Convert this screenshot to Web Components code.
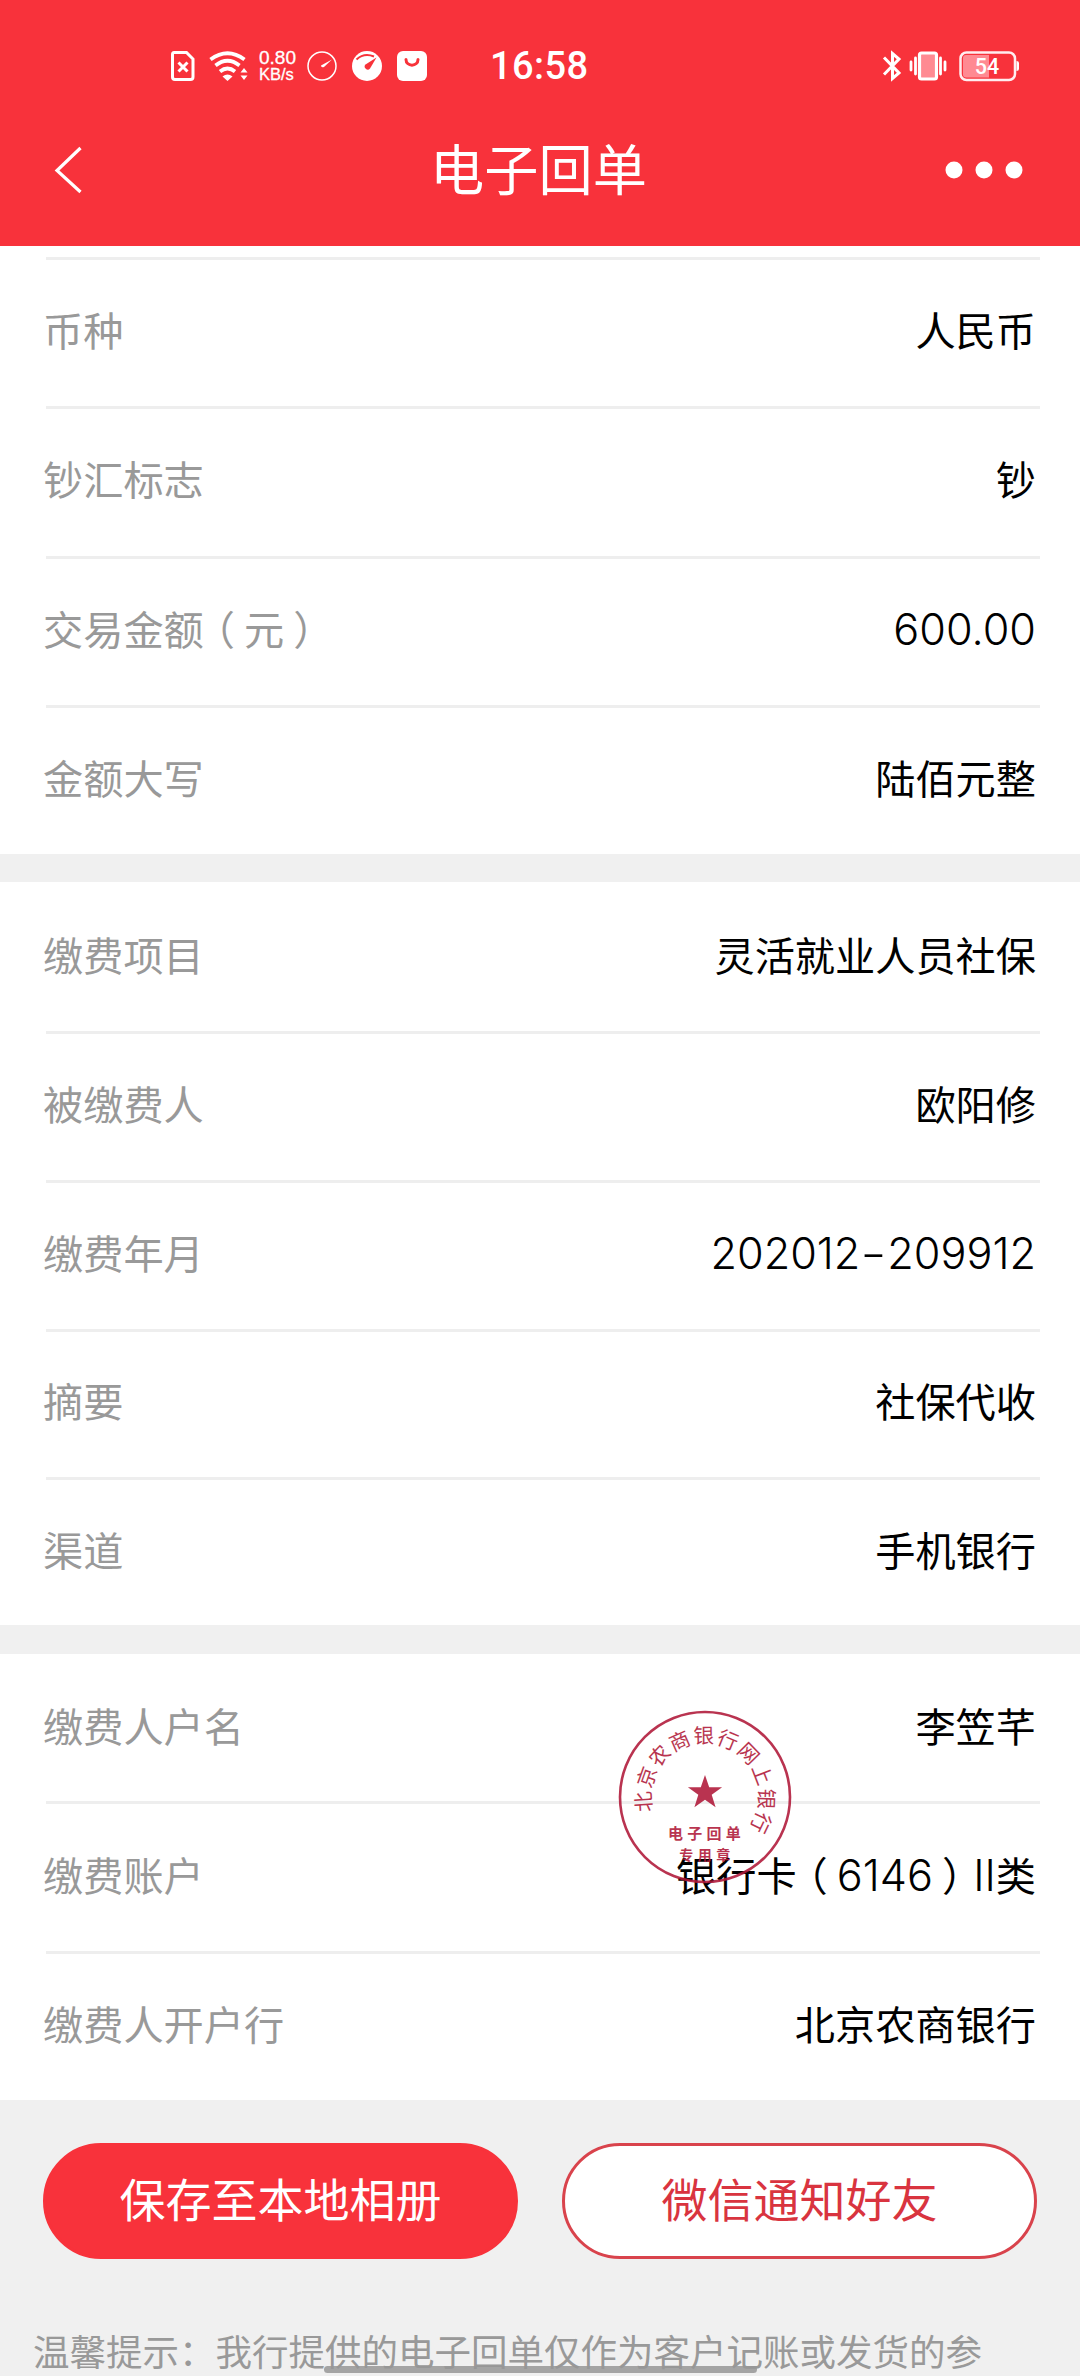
<!DOCTYPE html>
<html lang="zh-CN">
<head>
<meta charset="utf-8">
<title>电子回单</title>
<style>
html,body{
    margin:0;
    padding:0;
}
body{
    height:2376px;
    overflow:hidden;
    background:#f0f0f0;
    font-family:"Noto Sans CJK SC",sans-serif;
}
</style>
</head>
<body>
<receipt-page></receipt-page>
<script>
class StatusBar extends HTMLElement {

    constructor() {
        super();
        const shadowRoot = this.attachShadow({ mode: 'open' });
        shadowRoot.innerHTML = `
        <style>
        :host{
            display:flex;
            align-items:center;
            box-sizing:border-box;
            height:94px;
            padding:38px 60px 0 170px;
            color:#fff;
            font-family:Roboto,sans-serif;
        }
        svg{
            display:block;
            flex:none;
        }
        .speed{
            width:38px;
            margin:0 10px 0 11px;
            font-family:"Liberation Sans",sans-serif;
            font-size:19px;
            line-height:17px;
            white-space:nowrap;
            -webkit-text-stroke:.3px #fff;
        }
        .speed small{
            display:block;
            font-size:16.5px;
        }
        .time{
            flex:1;
            margin-left:63px;
            font-size:38px;
            line-height:40px;
            font-weight:500;
            letter-spacing:.4px;
        }
        </style>
        <svg width="26" height="32" viewBox="0 0 26 32" fill="none" stroke="#fff" stroke-width="3"><path d="M4 2.5H16.5L23 9V27Q23 29.500 20.500 29.500H5Q2.500 29.500 2.500 27V4.500Q2.500 2.500 4 2.500Z"/><path d="M8.500 12.500L17.500 21.500M17.500 12.500L8.500 21.500"/></svg>
        <svg style="margin-left:13px" width="39" height="32" viewBox="0 0 39 32" fill="none" stroke="#fff" stroke-width="3.800"><path d="M1.500 9.500Q18.500 -3 35.500 9.500"/><path d="M6.500 15.500Q18.500 6 30.500 15.500"/><path d="M11 21.500Q18.500 15.500 26 21.500"/><path d="M13.500 26.500Q18.500 22.500 23.500 26.500L18.500 31Z" fill="#fff" stroke="none"/><path d="M31.500 22.500L35 18L38.500 22.500ZM31.500 25.500L35 30L38.500 25.500Z" fill="#fff" stroke="none"/></svg>
        <div class="speed">0.80<small>KB/s</small></div>
        <svg width="30" height="32" viewBox="0 0 30 32"><circle cx="15" cy="16" r="14" fill="none" stroke="#fff" stroke-width="1.500"/><path d="M14 15.500L25 9.500L17 17Q14 18 14 15.500Z" fill="#fff"/></svg>
        <svg style="margin-left:15px" width="30" height="32" viewBox="0 0 30 32"><circle cx="15" cy="16" r="15" fill="#fff"/><path d="M4.500 9.500Q12 2.500 22 6.500" fill="none" stroke="#f83239" stroke-width="2"/><path d="M24.500 7.500L18 18.500A3 3 0 1 1 13.500 14.500Z" fill="#f83239"/></svg>
        <svg style="margin-left:15px" width="30" height="32" viewBox="0 0 30 32"><rect y="1" width="30" height="30" rx="6" fill="#fff"/><path d="M9 9.500C9 17 21 17 21 9.500" fill="none" stroke="#f83239" stroke-width="3" stroke-linecap="round"/></svg>
        <div class="time">16:58</div>
        <svg width="20" height="32" viewBox="0 0 20 32" fill="none" stroke="#fff" stroke-width="3"><path d="M2 7.500L17 23L10.500 28.500V3.500L17 9L2 24.500"/></svg>
        <svg style="margin:0 12px 0 7px" width="38" height="32" viewBox="0 0 38 32"><rect x="10.500" y="3" width="17" height="26" rx="2" fill="#ff8a92" stroke="#fff" stroke-width="3.200"/><path d="M6.500 8V24M2 12V20M31.500 8V24M36 12V20" stroke="#fff" stroke-width="2.800" stroke-linecap="round"/></svg>
        <svg width="61" height="32" viewBox="0 0 61 32"><rect x="1.500" y="2.500" width="54.500" height="27.500" rx="6" fill="none" stroke="#ffeef0" stroke-width="2.500"/><path d="M7 5H30V27.500H7Q4 27.500 4 24.500V8Q4 5 7 5Z" fill="#ff8a92"/><path d="M57.500 11Q60 11 60 13V19Q60 21 57.500 21Z" fill="#fff"/><text x="28" y="23.800" font-family="Roboto,sans-serif" font-size="21.500" font-weight="500" fill="#fff" text-anchor="middle">54</text></svg>
        `
    }
}

class NavBar extends HTMLElement {

    constructor() {
        super();
        const shadowRoot = this.attachShadow({ mode: 'open' });
        shadowRoot.innerHTML = `
        <style>
        :host{
            display:grid;
            grid-template-columns:1fr auto 1fr;
            align-items:center;
            height:152px;
            padding:0 57px 0 54px;
            color:#fff;
        }
        h1{
            margin:0;
            padding-bottom:7px;
            font-size:54.200px;
            font-weight:400;
            line-height:145px;
        }
        .more{
            justify-self:end;
        }
        svg{
            display:block;
        }
        </style>
        <svg width="30" height="48" viewBox="0 0 30 48"><path d="M26.500 2L3 24.500L26.500 46" fill="none" stroke="#fff" stroke-width="3.200"/></svg>
        <h1><slot></slot></h1>
        <svg class="more" width="78" height="18" viewBox="0 0 78 18" fill="#fff"><circle cx="9" cy="9" r="8.500"/><circle cx="39" cy="9" r="8.500"/><circle cx="69" cy="9" r="8.500"/></svg>
        `
    }
}

class ReceiptRow extends HTMLElement {

    constructor() {
        super();
        const shadowRoot = this.attachShadow({ mode: 'open' });
        shadowRoot.innerHTML = `
        <style>
        :host{
            display:block;
            height:var(--rowHeight,149.330px);
        }
        .row{
            display:flex;
            justify-content:space-between;
            align-items:center;
            box-sizing:border-box;
            height:100%;
            margin:0 40px 0 46px;
            padding:0 4px 8px 0;
            border-top:3px solid var(--lineColor,#eee);
            font-size:40.200px;
            line-height:60px;
            white-space:nowrap;
        }
        :host([first]) .row{
            border-color:transparent;
        }
        .label{
            margin-left:-3px;
            color:#999;
        }
        .value{
            color:#000;
        }
        .num{
            font-family:Inter,sans-serif;
            font-weight:350;
            font-size:43.200px;
            line-height:1;
        }
        .dash{
            display:inline-block;
            width:27px;
            text-align:center;
            transform:scaleX(1.35);
        }
        .open,
        .close{
            display:inline-block;
            transform:translateX(-9px);
        }
        .close{
            transform:translateX(9px);
        }
        </style>
        <div class="row">
            <span class="label">${this.format(this.label)}</span>
            <span class="value">${this.format(this.value)}</span>
        </div>
        `
    }

    get label() {
        return this.getAttribute('label')||'';
    }

    get value() {
        return this.getAttribute('value')||'';
    }

    // latin runs use their own face, full-width brackets sit centred in their cell
    format(text) {
        return text
            .replace(/[0-9.I-]+/g,(run)=>'<span class="num">'+run.replace('-','<span class="dash">-</span>')+'</span>')
            .replace(/（/g,'<span class="open">（</span>')
            .replace(/）/g,'<span class="close">）</span>');
    }
}

class ReceiptSection extends HTMLElement {

    constructor() {
        super();
        const shadowRoot = this.attachShadow({ mode: 'open' });
        shadowRoot.innerHTML = `
        <style>
        :host{
            display:block;
            position:relative;
            background:#fff;
        }
        </style>
        <slot></slot>
        `
    }
}

class BankStamp extends HTMLElement {

    constructor() {
        super();
        const shadowRoot = this.attachShadow({ mode: 'open' });
        shadowRoot.innerHTML = `
        <style>
        :host{
            display:block;
            width:174px;
            height:174px;
        }
        svg{
            display:block;
            opacity:.88;
        }
        </style>
        <svg width="174" height="174" viewBox="-87 -87 174 174" fill="#b01838" font-family="Noto Sans CJK SC,sans-serif">
            <circle r="85" fill="none" stroke="#b01838" stroke-width="2.600"/>
            <path id="arc" fill="none" d="M-52.100 14.200A54 54 0 1 1 41 35.200"/>
            <text font-size="20.500" letter-spacing="1.300" font-weight="400"><textPath href="#arc">北京农商银行网上银行</textPath></text>
            <path d="M0 -22L4.200 -9.800H17.100L6.700 -2.200L10.600 10.200L0 2.700L-10.600 10.200L-6.700 -2.200L-17.100 -9.800H-4.200Z"/>
            <text x="1.500" y="42" font-size="15" letter-spacing="4.200" font-weight="700" text-anchor="middle">电子回单</text>
            <text x="2" y="63" font-size="14" letter-spacing="4.500" font-weight="700" text-anchor="middle">专用章</text>
        </svg>
        `
    }
}

class PillButton extends HTMLElement {

    constructor() {
        super();
        const shadowRoot = this.attachShadow({ mode: 'open' });
        shadowRoot.innerHTML = `
        <style>
        :host{
            display:block;
            flex:1;
        }
        button{
            display:block;
            box-sizing:border-box;
            width:100%;
            height:116px;
            padding:0 0 8px;
            border:3px solid #f8323b;
            border-radius:58px;
            background:#f8323b;
            color:#fff;
            font:inherit;
            font-size:46px;
        }
        :host([plain]) button{
            background:#fff;
            border-color:#d9434c;
            color:#d9343f;
        }
        </style>
        <button type="button"><slot></slot></button>
        `
    }
}

class ReceiptPage extends HTMLElement {

    constructor() {
        super();
        const shadowRoot = this.attachShadow({ mode: 'open' });
        shadowRoot.innerHTML = `
        <style>
        :host{
            display:flex;
            flex-direction:column;
            position:relative;
            width:1080px;
            height:2376px;
            overflow:hidden;
        }
        header{
            height:246px;
            background:#f8323b;
        }
        .money{
            height:598px;
            padding-top:11px;
            margin-bottom:28px;
        }
        .fee{
            height:743px;
            margin-bottom:29px;
            --rowHeight:148.750px;
        }
        .payer{
            height:446px;
            --rowHeight:149.500px;
        }
        .payer [first]{
            --rowHeight:147px;
        }
        bank-stamp{
            position:absolute;
            left:618px;
            top:56px;
        }
        .buttons{
            display:flex;
            gap:44px;
            padding:43px 43px 0;
        }
        .tips{
            margin:62px 0 0 33px;
            color:#999;
            font-size:36.500px;
            line-height:60px;
            white-space:nowrap;
        }
        .home{
            position:absolute;
            left:324px;
            top:2366px;
            width:433px;
            height:7px;
            border-radius:4px;
            background:rgba(150,150,150,.850);
        }
        </style>
        <header>
            <status-bar></status-bar>
            <nav-bar>电子回单</nav-bar>
        </header>
        <receipt-section class="money">
            <receipt-row label="币种" value="人民币"></receipt-row>
            <receipt-row label="钞汇标志" value="钞"></receipt-row>
            <receipt-row label="交易金额（元）" value="600.00"></receipt-row>
            <receipt-row label="金额大写" value="陆佰元整"></receipt-row>
        </receipt-section>
        <receipt-section class="fee">
            <receipt-row first label="缴费项目" value="灵活就业人员社保"></receipt-row>
            <receipt-row label="被缴费人" value="欧阳修"></receipt-row>
            <receipt-row label="缴费年月" value="202012-209912"></receipt-row>
            <receipt-row label="摘要" value="社保代收"></receipt-row>
            <receipt-row label="渠道" value="手机银行"></receipt-row>
        </receipt-section>
        <receipt-section class="payer">
            <receipt-row first label="缴费人户名" value="李笠芊"></receipt-row>
            <receipt-row label="缴费账户" value="银行卡（6146）II类"></receipt-row>
            <receipt-row label="缴费人开户行" value="北京农商银行"></receipt-row>
            <bank-stamp></bank-stamp>
        </receipt-section>
        <div class="buttons">
            <pill-button>保存至本地相册</pill-button>
            <pill-button plain>微信通知好友</pill-button>
        </div>
        <div class="tips">温馨提示：我行提供的电子回单仅作为客户记账或发货的参</div>
        <div class="home"></div>
        `
    }
}

customElements.define('status-bar', StatusBar);
customElements.define('nav-bar', NavBar);
customElements.define('receipt-row', ReceiptRow);
customElements.define('receipt-section', ReceiptSection);
customElements.define('bank-stamp', BankStamp);
customElements.define('pill-button', PillButton);
customElements.define('receipt-page', ReceiptPage);
</script>
</body>
</html>
